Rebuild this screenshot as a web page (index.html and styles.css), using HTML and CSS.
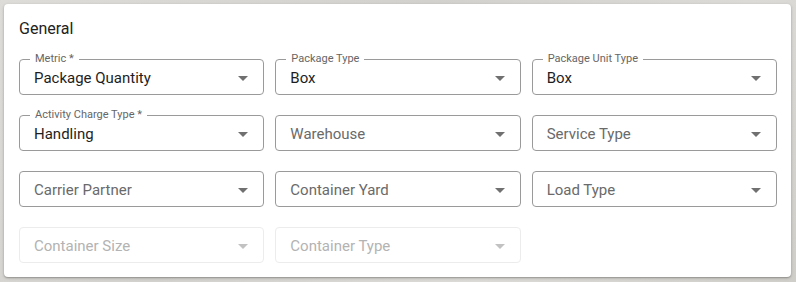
FILE: index.html
```html
<!DOCTYPE html>
<html>
<head>
<meta charset="utf-8">
<link rel="stylesheet" href="styles.css">
</head>
<body>
<div class="card">
  <div class="title">General</div>
  <div class="grid">
    <div class="field"><span class="label">Metric *</span><span class="value">Package Quantity</span><svg class="arrow" viewBox="0 0 10 5"><path d="M0 0l5 5 5-5z"/></svg></div>
    <div class="field"><span class="label">Package Type</span><span class="value">Box</span><svg class="arrow" viewBox="0 0 10 5"><path d="M0 0l5 5 5-5z"/></svg></div>
    <div class="field"><span class="label">Package Unit Type</span><span class="value">Box</span><svg class="arrow" viewBox="0 0 10 5"><path d="M0 0l5 5 5-5z"/></svg></div>

    <div class="field"><span class="label">Activity Charge Type *</span><span class="value">Handling</span><svg class="arrow" viewBox="0 0 10 5"><path d="M0 0l5 5 5-5z"/></svg></div>
    <div class="field"><span class="placeholder">Warehouse</span><svg class="arrow" viewBox="0 0 10 5"><path d="M0 0l5 5 5-5z"/></svg></div>
    <div class="field"><span class="placeholder">Service Type</span><svg class="arrow" viewBox="0 0 10 5"><path d="M0 0l5 5 5-5z"/></svg></div>

    <div class="field"><span class="placeholder">Carrier Partner</span><svg class="arrow" viewBox="0 0 10 5"><path d="M0 0l5 5 5-5z"/></svg></div>
    <div class="field"><span class="placeholder">Container Yard</span><svg class="arrow" viewBox="0 0 10 5"><path d="M0 0l5 5 5-5z"/></svg></div>
    <div class="field"><span class="placeholder">Load Type</span><svg class="arrow" viewBox="0 0 10 5"><path d="M0 0l5 5 5-5z"/></svg></div>

    <div class="field disabled"><span class="placeholder">Container Size</span><svg class="arrow" viewBox="0 0 10 5"><path d="M0 0l5 5 5-5z"/></svg></div>
    <div class="field disabled"><span class="placeholder">Container Type</span><svg class="arrow" viewBox="0 0 10 5"><path d="M0 0l5 5 5-5z"/></svg></div>
  </div>
</div>
</body>
</html>
```

FILE: styles.css
```css
html, body {
  margin: 0;
  padding: 0;
}
body {
  width: 796px;
  height: 282px;
  background: linear-gradient(135deg, #dedcd8 0%, #d3d1cd 40%, #dcdad6 70%, #d0cec9 100%);
  font-family: Roboto, "Noto Sans", sans-serif;
  padding: 4px 5px 5px 4px;
  box-sizing: border-box;
}
.card {
  background: #fff;
  border-radius: 4px;
  box-shadow: 0 1px 3px rgba(0,0,0,0.25), 0 1px 1px rgba(0,0,0,0.12);
  padding: 14px 14px 14px 15px;
  height: 273px;
  box-sizing: border-box;
}
.title {
  font-size: 16px;
  line-height: 20px;
  color: #222;
  margin-left: 0;
  margin-top: 1px;
  margin-bottom: 20px;
}
.grid {
  display: grid;
  grid-template-columns: repeat(3, 1fr);
  column-gap: 11px;
  row-gap: 20px;
}
.field {
  position: relative;
  height: 36px;
  box-sizing: border-box;
  border: 1px solid #9a9a9a;
  border-radius: 4px;
  display: flex;
  align-items: center;
  padding-left: 14px;
  padding-right: 15px;
}
.label {
  position: absolute;
  left: 10px;
  top: -8px;
  padding: 0 5px;
  background: #fff;
  font-size: 11px;
  line-height: 14px;
  color: #666;
}
.value {
  flex: 1;
  font-size: 15px;
  color: #1e1e1e;
  margin-top: 1px;
}
.placeholder {
  flex: 1;
  font-size: 15px;
  color: #6a6a6a;
  margin-top: 1px;
}
.arrow {
  width: 10px;
  height: 5px;
  fill: #707070;
  margin-top: 3px;
}
.field.disabled {
  border-color: #ececec;
}
.field.disabled .placeholder {
  color: #b3b3b3;
}
.field.disabled .arrow {
  fill: #c2c2c2;
}
```
